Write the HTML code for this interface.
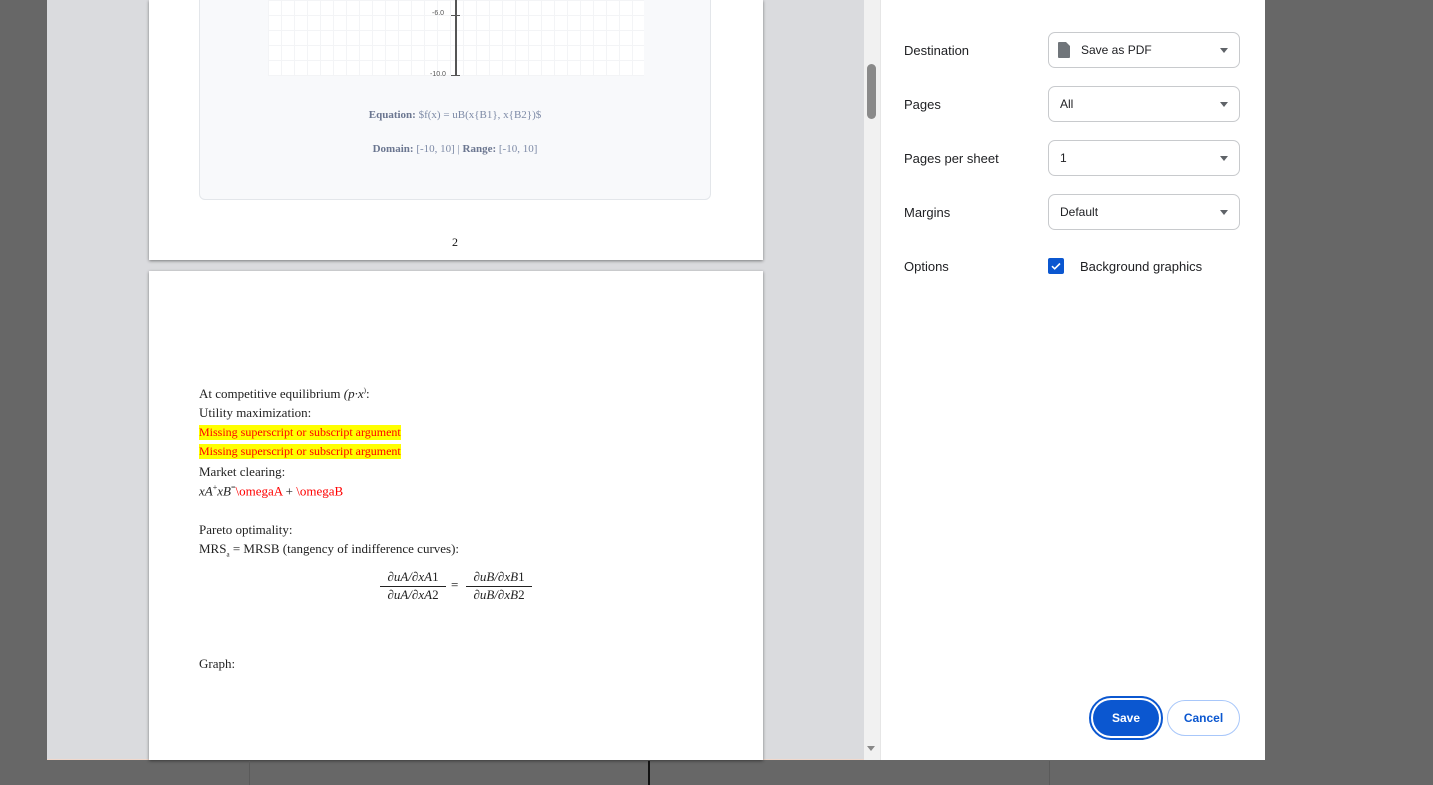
<!DOCTYPE html>
<html><head><meta charset="utf-8"><style>
*{margin:0;padding:0;box-sizing:border-box}
body{width:1433px;height:785px;background:#676767;position:relative;overflow:hidden;font-family:"Liberation Sans",sans-serif}
.abs{position:absolute}
.dlg{left:47px;top:0;width:1218px;height:760px;background:#dadbde;border-bottom:1px solid #f0d8cc}
.page{background:#fff;box-shadow:0 1px 3px rgba(0,0,0,.45)}
.serif{font-family:"Liberation Serif",serif}
.lbl{position:absolute;left:904px;font-size:13px;color:#202124}
.sel{position:absolute;left:1048px;width:192px;height:36px;border:1px solid #c8cacd;border-radius:7px;font-size:12px;color:#202124;padding-left:11px;line-height:35px}
.sel:after{content:"";position:absolute;right:11px;top:15px;border-left:4px solid transparent;border-right:4px solid transparent;border-top:5px solid #5f6368}
.tx{position:absolute;left:199px;font-size:13px;color:#222}
</style></head><body>
<div class="abs dlg"></div>
<!-- page 1 -->
<div class="abs page" style="left:149px;top:0;width:614px;height:260px"></div>
<div class="abs" style="left:199px;top:-10px;width:512px;height:210px;background:#f8f9fb;border:1px solid #e3e6ea;border-radius:6px"></div>
<div class="abs" style="left:268px;top:0;width:376px;height:76px;background-color:#fff;background-image:linear-gradient(#f3f4f6 1px,transparent 1px),linear-gradient(90deg,#f3f4f6 1px,transparent 1px);background-size:13px 15px"></div>
<div class="abs" style="left:455px;top:0;width:2px;height:76px;background:#555"></div>
<div class="abs" style="left:451px;top:15px;width:9px;height:1px;background:#555"></div>
<div class="abs" style="left:451px;top:75px;width:9px;height:1px;background:#555"></div>
<div class="abs" style="left:432px;top:10px;font-size:7px;color:#555">-6.0</div>
<div class="abs" style="left:430px;top:71px;font-size:7px;color:#555">-10.0</div>
<div class="abs serif" style="left:199px;width:512px;top:109px;text-align:center;font-size:11px;color:#7d8aa6"><b style="color:#6b7690">Equation:</b> $f(x) = uB(x{B1}, x{B2})$</div>
<div class="abs serif" style="left:199px;width:512px;top:143px;text-align:center;font-size:11px;color:#7d8aa6"><b style="color:#6b7690">Domain:</b> [-10, 10] | <b style="color:#6b7690">Range:</b> [-10, 10]</div>
<div class="abs serif" style="left:452px;top:235px;font-size:12px;color:#111">2</div>
<!-- page 2 -->
<div class="abs page" style="left:149px;top:271px;width:614px;height:489px"></div>
<div class="tx serif" style="top:386px">At competitive equilibrium <i>(p·x</i><sup style="font-size:7px">)</sup>:</div>
<div class="tx serif" style="top:405px">Utility maximization:</div>
<div class="tx serif" style="top:425px;background:#ff0;color:#f00;font-size:12px;line-height:15px">Missing superscript or subscript argument</div>
<div class="tx serif" style="top:444px;background:#ff0;color:#f00;font-size:12px;line-height:15px">Missing superscript or subscript argument</div>
<div class="tx serif" style="top:464px">Market clearing:</div>
<div class="tx serif" style="top:483px"><i>xA</i><sup style="font-size:8px">+</sup><i>xB</i><sup style="font-size:8px">=</sup><span style="color:#f00">\omegaA</span> + <span style="color:#f00">\omegaB</span></div>
<div class="tx serif" style="top:522px">Pareto optimality:</div>
<div class="tx serif" style="top:541px">MRS<sub style="font-size:7px">a</sub> = MRSB (tangency of indifference curves):</div>
<div class="abs serif" style="left:380px;top:569px;font-size:13px;color:#222;text-align:center;width:66px"><i>∂uA/∂xA</i>1<div style="border-top:1px solid #222;margin-top:1px"><i>∂uA/∂xA</i>2</div></div>
<div class="abs serif" style="left:451px;top:577px;font-size:13px">=</div>
<div class="abs serif" style="left:466px;top:569px;font-size:13px;color:#222;text-align:center;width:66px"><i>∂uB/∂xB</i>1<div style="border-top:1px solid #222;margin-top:1px"><i>∂uB/∂xB</i>2</div></div>
<div class="tx serif" style="top:656px">Graph:</div>
<!-- scrollbar -->
<div class="abs" style="left:864px;top:0;width:16px;height:760px;background:#f1f1f1"></div>
<div class="abs" style="left:867px;top:64px;width:9px;height:55px;background:#8a8a8a;border-radius:5px"></div>
<div class="abs" style="left:867px;top:746px;border-left:4px solid transparent;border-right:4px solid transparent;border-top:5px solid #888"></div>
<!-- right panel -->
<div class="abs" style="left:880px;top:0;width:385px;height:760px;background:#fff;border-left:1px solid #e6e6e6"></div>
<div class="lbl" style="top:43px">Destination</div>
<div class="sel" style="top:32px;padding-left:32px">Save as PDF<svg style="position:absolute;left:9px;top:9px" width="12" height="16" viewBox="0 0 12 16"><path d="M1 0h7l4 4v11a1 1 0 0 1-1 1H1a1 1 0 0 1-1-1V1a1 1 0 0 1 1-1z" fill="#70757a"/></svg></div>
<div class="lbl" style="top:97px">Pages</div>
<div class="sel" style="top:86px">All</div>
<div class="lbl" style="top:151px">Pages per sheet</div>
<div class="sel" style="top:140px">1</div>
<div class="lbl" style="top:205px">Margins</div>
<div class="sel" style="top:194px">Default</div>
<div class="lbl" style="top:259px">Options</div>
<div class="abs" style="left:1048px;top:258px;width:16px;height:16px;background:#0b57d0;border-radius:2px"><svg width="16" height="16"><path d="M4 8.2l2.7 2.6L12 5.5" stroke="#fff" stroke-width="1.6" fill="none"/></svg></div>
<div class="abs" style="left:1080px;top:259px;font-size:13px;color:#202124">Background graphics</div>
<div class="abs" style="left:1089px;top:696px;width:74px;height:44px;border:2px solid #0b57d0;border-radius:22px;padding:2px"><div style="width:100%;height:100%;background:#0b57d0;border-radius:18px;color:#fff;font-size:12px;font-weight:bold;text-align:center;line-height:36px">Save</div></div>
<div class="abs" style="left:1167px;top:700px;width:73px;height:36px;border:1px solid #a8c7fa;border-radius:18px;color:#0b57d0;font-size:12px;font-weight:bold;text-align:center;line-height:34px">Cancel</div>
<!-- below dialog -->
<div class="abs" style="left:249px;top:761px;width:1px;height:24px;background:#5a5a5a"></div>
<div class="abs" style="left:1049px;top:761px;width:1px;height:24px;background:#5a5a5a"></div>
<div class="abs" style="left:648px;top:761px;width:2px;height:24px;background:#111"></div>
</body></html>
